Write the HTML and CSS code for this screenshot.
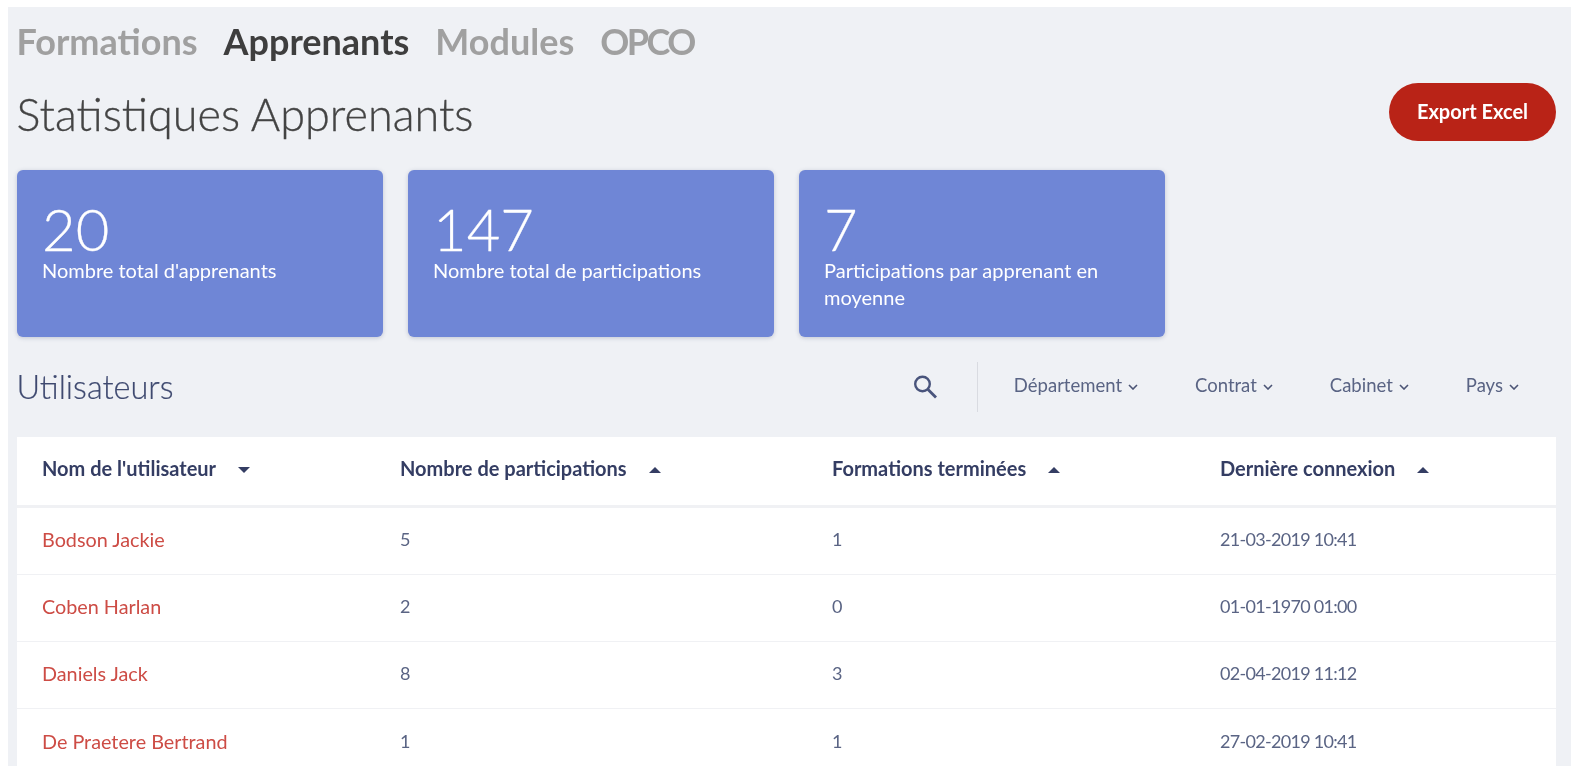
FILE: index.html
```html
<!DOCTYPE html>
<html lang="fr">
<head>
<meta charset="utf-8">
<title>Statistiques Apprenants</title>
<link rel="stylesheet" href="styles.css">
</head>
<body>
<main class="page">
  <nav class="tabs">
    <a class="tab">Formations</a>
    <a class="tab tab-active">Apprenants</a>
    <a class="tab">Modules</a>
    <a class="tab tab-tight">OPCO</a>
  </nav>
  <header class="head">
    <h1 class="title">Statistiques Apprenants</h1>
    <button class="export">Export Excel</button>
  </header>
  <section class="cards">
    <article class="card"><div class="num">20</div><div class="lab">Nombre total d'apprenants</div></article>
    <article class="card"><div class="num">147</div><div class="lab">Nombre total de participations</div></article>
    <article class="card"><div class="num">7</div><div class="lab">Participations par apprenant en moyenne</div></article>
  </section>
  <section class="toolbar">
    <h2 class="subtitle">Utilisateurs</h2>
    <div class="search">
      <svg width="24" height="24" viewBox="0 0 24 24"><circle cx="9.5" cy="9" r="7.3" fill="none" stroke="#49547c" stroke-width="2.4"/><path d="M15 14.5L23 22.5" stroke="#49547c" stroke-width="2.8" fill="none"/></svg>
    </div>
    <div class="filters">
      <span class="filter">Département<svg class="chev" viewBox="0 0 10 6"><path d="M1 1l4 4 4-4" /></svg></span>
      <span class="filter">Contrat<svg class="chev" viewBox="0 0 10 6"><path d="M1 1l4 4 4-4" /></svg></span>
      <span class="filter">Cabinet<svg class="chev" viewBox="0 0 10 6"><path d="M1 1l4 4 4-4" /></svg></span>
      <span class="filter">Pays<svg class="chev" viewBox="0 0 10 6"><path d="M1 1l4 4 4-4" /></svg></span>
    </div>
  </section>
  <section class="table">
    <div class="row row-head">
      <div>Nom de l'utilisateur<i class="sort down"></i></div>
      <div>Nombre de participations<i class="sort up"></i></div>
      <div>Formations terminées<i class="sort up"></i></div>
      <div>Dernière connexion<i class="sort up"></i></div>
    </div>
    <div class="row"><div class="name">Bodson Jackie</div><div class="n">5</div><div class="n">1</div><div class="date">21-03-2019 10:41</div></div>
    <div class="row"><div class="name">Coben Harlan</div><div class="n">2</div><div class="n">0</div><div class="date">01-01-1970 01:00</div></div>
    <div class="row"><div class="name">Daniels Jack</div><div class="n">8</div><div class="n">3</div><div class="date">02-04-2019 11:12</div></div>
    <div class="row row-last"><div class="name">De Praetere Bertrand</div><div class="n">1</div><div class="n">1</div><div class="date">27-02-2019 10:41</div></div>
  </section>
</main>
</body>
</html>
```
FILE: styles.css
```css
* { box-sizing: border-box; }
html, body { height: 100%; }
body {
  margin: 0;
  padding: 7px 5px 5px 8px;
  background: #fff;
  overflow: hidden;
  font-family: Lato, "Noto Sans", sans-serif;
}
.page {
  height: 759px;
  background: #eff1f5;
  padding: 0 15px 0 8.5px;
  overflow: hidden;
  display: flex;
  flex-direction: column;
  filter: blur(0.45px);
}
.tabs {
  flex: none;
  display: flex;
  gap: 26px;
  height: 68px;
  padding-top: 13px;
  font-size: 36px;
  line-height: 42px;
  font-weight: 700;
  color: #a0a0a0;
}
.tab-active { color: #3e3e3e; }
.tab-tight { letter-spacing: -2.5px; }
.head {
  flex: none;
  display: flex;
  justify-content: space-between;
  align-items: flex-start;
  height: 95px;
}
.title {
  margin: 12px 0 0;
  font-size: 45px;
  line-height: 54px;
  font-weight: 300;
  color: #444;
  -webkit-text-stroke: 0.3px;
}
.export {
  width: 167px;
  height: 58px;
  margin-top: 8px;
  padding: 0 0 2px;
  border: 0;
  border-radius: 29px;
  background: #b92317;
  color: #fff;
  font: 700 20px Lato, sans-serif;
}
.cards {
  flex: none;
  display: flex;
  gap: 25px;
  height: 167px;
}
.card {
  width: 366px;
  background: #6f86d6;
  border-radius: 6px;
  box-shadow: 0 1px 4px rgba(60, 70, 110, .25);
  padding: 30px 25.5px 0;
  color: #fff;
}
.num { font-size: 58px; line-height: 57px; font-weight: 300; -webkit-text-stroke: 0.3px; }
.lab { font-size: 20px; line-height: 27px; }
.toolbar {
  flex: none;
  display: flex;
  align-items: center;
  height: 100px;
  color: #3b4468;
}
.subtitle {
  margin: 0 0 2px;
  font-size: 32.5px;
  font-weight: 300;
  color: #3f4a70;
  flex: 1;
  -webkit-text-stroke: 0.2px;
}
.search {
  width: 65px;
  height: 50px;
  border-right: 1px solid #d9dbe1;
  display: flex;
  align-items: center;
}
.filters {
  display: flex;
  gap: 57px;
  padding: 0 37px 4px 36px;
  font-size: 18.5px;
  color: #5a6484;
}
.filter { display: flex; align-items: center; gap: 6px; }
.chev { width: 10px; height: 6px; margin-top: 3px; fill: none; stroke: #4b5475; stroke-width: 1.6; }
.table {
  flex: none;
  background: #fff;
}
.row {
  display: grid;
  grid-template-columns: 358px 432px 388px 1fr;
  align-items: center;
  height: 67px;
  padding: 0 0 4px 25.5px;
  border-bottom: 1px solid #f0f1f4;
  font-size: 19.8px;
  color: #5a6484;
}
.row-head {
  height: 71px;
  padding-bottom: 7px;
  border-bottom: 3px solid #f0f1f4;
  font-size: 20px;
  font-weight: 700;
  color: #343d63;
}
.row-last { border-bottom: 0; }
.name { color: #cd4c45; }
.n, .date { font-size: 18px; }
.date { letter-spacing: -0.7px; }
.sort {
  display: inline-block;
  margin-left: 22px;
  vertical-align: middle;
  border-left: 6px solid transparent;
  border-right: 6px solid transparent;
}
.down { border-top: 6px solid #343d63; }
.up { border-bottom: 6px solid #343d63; }
```
